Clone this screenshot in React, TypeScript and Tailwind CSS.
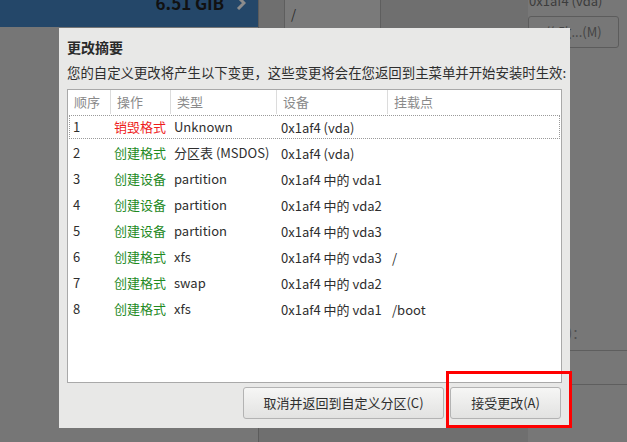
const rows = [
  { n: "1", op: "销毁格式", opColor: "text-[#ee1c1c]", type: "Unknown", dev: "0x1af4 (vda)", mount: "" },
  { n: "2", op: "创建格式", opColor: "text-[#1f8a1f]", type: "分区表 (MSDOS)", dev: "0x1af4 (vda)", mount: "" },
  { n: "3", op: "创建设备", opColor: "text-[#1f8a1f]", type: "partition", dev: "0x1af4 中的 vda1", mount: "" },
  { n: "4", op: "创建设备", opColor: "text-[#1f8a1f]", type: "partition", dev: "0x1af4 中的 vda2", mount: "" },
  { n: "5", op: "创建设备", opColor: "text-[#1f8a1f]", type: "partition", dev: "0x1af4 中的 vda3", mount: "" },
  { n: "6", op: "创建格式", opColor: "text-[#1f8a1f]", type: "xfs", dev: "0x1af4 中的 vda3", mount: "/" },
  { n: "7", op: "创建格式", opColor: "text-[#1f8a1f]", type: "swap", dev: "0x1af4 中的 vda2", mount: "" },
  { n: "8", op: "创建格式", opColor: "text-[#1f8a1f]", type: "xfs", dev: "0x1af4 中的 vda1", mount: "/boot" },
];

const headers = ["顺序", "操作", "类型", "设备", "挂载点"];

const App = () => {
  return (
    <div className="relative w-[627px] h-[442px] overflow-hidden bg-[#727272] font-['Noto_Sans_CJK_SC',sans-serif] text-[#2e2e2e]">
      {/* dimmed screen behind the dialog */}
      <div className="flex h-full">
        <div className="w-[259px] shrink-0 border-r border-[#5c5c5c] bg-[#767676]">
          <div className="h-[27px] bg-[#244769] flex justify-end items-start pr-[12px] gap-[12px]">
            <span className="-mt-[7px] text-[17px] leading-[20px] font-bold text-[#111]">6.51 GiB</span>
            <svg width="10" height="14" viewBox="0 0 10 14" className="-mt-[4px]">
              <path d="M2 1 L8 7 L2 13" fill="none" stroke="#8c8c8c" strokeWidth="3" />
            </svg>
          </div>
        </div>
        <div className="flex-1 flex bg-[#6f6f6f]">
          <div className="ml-[25px] w-[97px] h-[40px] bg-[#7a7a7a] border-x border-b border-[#5e5e5e] rounded-b-[3px] pl-[6px] pt-[4px] text-[13px] text-[#2a2a2a]">
            /
          </div>
          <div className="ml-auto w-[99px] bg-[#777] flex flex-col">
            <span className="-mt-[8px] text-[13px] leading-[18px] text-[#3c3c3c] pl-[1px]">0x1af4 (vda)</span>
            <div className="mt-[6px] w-[91px] h-[32px] border border-[#5c5c5c] rounded-[3px] flex items-center justify-center text-[13px] text-[#444]">
              修改...(M)
            </div>
            <div className="mt-[277px] flex justify-start text-[13px] text-[#505050] leading-[16px]">
              <span className="w-[53px] text-right whitespace-nowrap">名称(N)：</span>
            </div>
            <div className="mt-[9px] border-t border-[#5e5e5e]" />
            <div className="mt-[33px] border-t border-[#5e5e5e]" />
          </div>
        </div>
      </div>

      {/* summary dialog */}
      <div className="absolute left-[59px] top-[28px] w-[511px] h-[400px] bg-[#e8e8e7] px-[8px] pt-[10px] flex flex-col">
        <div className="text-[14px] leading-[18px] font-bold text-[#2a2a2a]">更改摘要</div>
        <div className="mt-[8px] text-[13.4px] leading-[16px] whitespace-nowrap">
          您的自定义更改将产生以下变更，这些变更将会在您返回到主菜单并开始安装时生效:
        </div>
        <div className="mt-[9px] h-[294px] bg-white border border-[#a9a9a9] text-[13px]">
          <div className="grid grid-cols-[42px_60px_106px_111px_1fr] h-[24px] items-center text-[#8a8a8a]">
            {headers.map((h, i) => (
              <div key={h} className={`h-full flex items-center pl-[6px] ${i > 0 ? "border-l border-[#dcdcdc]" : ""}`}>
                {h}
              </div>
            ))}
          </div>
          {rows.map((r, i) => (
            <div
              key={r.n}
              className={`grid grid-cols-[42px_60px_106px_111px_1fr] h-[26px] items-center whitespace-nowrap ${
                i === 0 ? "outline-1 outline-dotted outline-[#9a9a9a] -outline-offset-2" : ""
              }`}
            >
              <span className="pl-[5px]">{r.n}</span>
              <span className={`pl-[4px] ${r.opColor}`}>{r.op}</span>
              <span className="pl-[4px]">{r.type}</span>
              <span className="pl-[5px] pt-[2px]">{r.dev}</span>
              <span className="pl-[5px] pt-[2px]">{r.mount}</span>
            </div>
          ))}
        </div>
        <div className="mt-[4px] flex justify-end gap-[6px] pr-[1px]">
          <button className="w-[201px] h-[32px] rounded-[3px] border border-[#b3b3b3] bg-gradient-to-b from-[#f6f6f5] to-[#e2e2e1] text-[13px] text-[#2e2e2e]">
            取消并返回到自定义分区(C)
          </button>
          <button className="w-[111px] h-[32px] rounded-[3px] border border-[#b3b3b3] bg-gradient-to-b from-[#f6f6f5] to-[#e2e2e1] text-[13px] text-[#2e2e2e]">
            接受更改(A)
          </button>
        </div>
      </div>

      {/* red highlight annotation */}
      <div className="absolute left-[446px] top-[371px] w-[126px] h-[57px] border-[3px] border-[#ff0000]" />
    </div>
  );
};

export default App;
